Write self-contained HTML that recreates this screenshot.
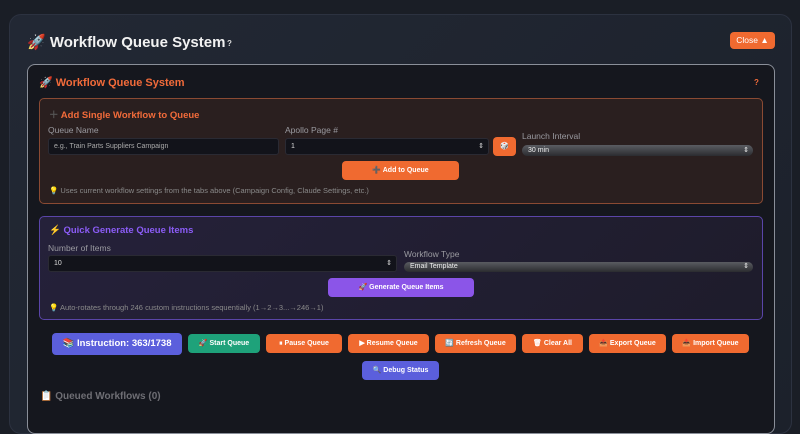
<!DOCTYPE html>
<html><head><style>
*{box-sizing:border-box;margin:0;padding:0}
body{width:800px;height:418px;overflow:hidden;background:#1a1e26;font-family:"Liberation Sans",sans-serif;position:relative}
.a{position:absolute}
.outer{left:9px;top:14px;width:783px;height:420px;border:1px solid #2c3240;border-radius:12px;background:linear-gradient(135deg,#222834,#1c212b)}
.inner{left:27px;top:64px;width:748px;height:370px;border:1.5px solid #8a8f99;border-radius:8px;background:#15171e}
.card1{left:39px;top:98px;width:724px;height:106px;border:1px solid #8a4a33;border-radius:5px;background:#2a1f1f}
.card2{left:39px;top:216px;width:724px;height:104px;border:1px solid #5a45a8;border-radius:5px;background:linear-gradient(135deg,#25213a,#1e1c2b)}
.lbl{font-size:8.5px;color:#9a9aa0}
.inp{background:#12131a;border:1px solid #2a2a33;border-radius:3px;font-size:7px;color:#ddd;padding-left:5px;line-height:16px}
.sel{background:linear-gradient(#5a5c62,#2b2c30);border-radius:6px;font-size:7px;color:#eee;padding-left:6px;line-height:11px}
.btn{border-radius:4px;color:#fff;font-size:7px;font-weight:bold;text-align:center;line-height:19px}
.or{background:#f06a30}
.hint{font-size:7.5px;color:#8a8a8a}
</style></head><body>
<div class="a outer"></div>
<div class="a" style="left:27px;top:33px;font-size:15px;font-weight:bold;color:#f2f2f2">🚀 Workflow Queue System</div>
<div class="a" style="left:227px;top:39px;font-size:8px;font-weight:bold;color:#ddd">?</div>
<div class="a btn or" style="left:730px;top:32px;width:45px;height:17px;line-height:17px;font-size:8.5px;font-weight:normal">Close ▲</div>
<div class="a inner"></div>
<div class="a" style="left:39px;top:76px;font-size:11px;font-weight:bold;color:#f26b3a">🚀 Workflow Queue System</div>
<div class="a" style="left:754px;top:78px;font-size:8px;font-weight:bold;color:#f26b3a">?</div>

<div class="a card1"></div>
<div class="a" style="left:49px;top:107px;font-size:9.5px;font-weight:bold;color:#f26b3a"><span style="color:#555">＋</span> Add Single Workflow to Queue</div>
<div class="a lbl" style="left:48px;top:125px">Queue Name</div>
<div class="a inp" style="left:48px;top:138px;width:231px;height:17px;color:#aaa">e.g., Train Parts Suppliers Campaign</div>
<div class="a lbl" style="left:285px;top:125px">Apollo Page #</div>
<div class="a inp" style="left:285px;top:138px;width:204px;height:17px">1<span style="float:right;margin-right:4px">⇕</span></div>
<div class="a btn or" style="left:493px;top:137px;width:23px;height:19px">🎲</div>
<div class="a lbl" style="left:522px;top:131px">Launch Interval</div>
<div class="a sel" style="left:522px;top:145px;width:231px;height:11px">30 min<span style="float:right;margin-right:4px">⇕</span></div>
<div class="a btn or" style="left:342px;top:161px;width:117px;height:19px">➕ Add to Queue</div>
<div class="a hint" style="left:49px;top:186px">💡 Uses current workflow settings from the tabs above (Campaign Config, Claude Settings, etc.)</div>

<div class="a card2"></div>
<div class="a" style="left:49px;top:225px;font-size:9.5px;font-weight:bold;color:#8b5cf6">⚡ Quick Generate Queue Items</div>
<div class="a lbl" style="left:48px;top:243px">Number of Items</div>
<div class="a inp" style="left:48px;top:255px;width:349px;height:17px">10<span style="float:right;margin-right:4px">⇕</span></div>
<div class="a lbl" style="left:404px;top:249px">Workflow Type</div>
<div class="a sel" style="left:404px;top:262px;width:349px;height:10px;line-height:10px">Email Template<span style="float:right;margin-right:4px">⇕</span></div>
<div class="a btn" style="left:328px;top:278px;width:146px;height:19px;background:#8b55e8">🚀 Generate Queue Items</div>
<div class="a hint" style="left:49px;top:303px">💡 Auto-rotates through 246 custom instructions sequentially (1→2→3...→246→1)</div>

<div class="a btn" style="left:52px;top:333px;width:130px;height:22px;line-height:22px;font-size:9.5px;background:#5b5fdc">📚 Instruction: 363/1738</div>
<div class="a btn" style="left:188px;top:334px;width:72px;background:#1ea27a">🚀 Start Queue</div>
<div class="a btn or" style="left:266px;top:334px;width:76px">⏸ Pause Queue</div>
<div class="a btn or" style="left:348px;top:334px;width:81px">▶ Resume Queue</div>
<div class="a btn or" style="left:435px;top:334px;width:81px">🔄 Refresh Queue</div>
<div class="a btn or" style="left:522px;top:334px;width:61px">🗑 Clear All</div>
<div class="a btn or" style="left:589px;top:334px;width:77px">📤 Export Queue</div>
<div class="a btn or" style="left:672px;top:334px;width:77px">📥 Import Queue</div>
<div class="a btn" style="left:362px;top:361px;width:77px;background:#5b5fdc">🔍 Debug Status</div>
<div class="a" style="left:40px;top:391px;font-size:10px;font-weight:bold;color:#6e6e74">📋 Queued Workflows (0)</div>
</body></html>
